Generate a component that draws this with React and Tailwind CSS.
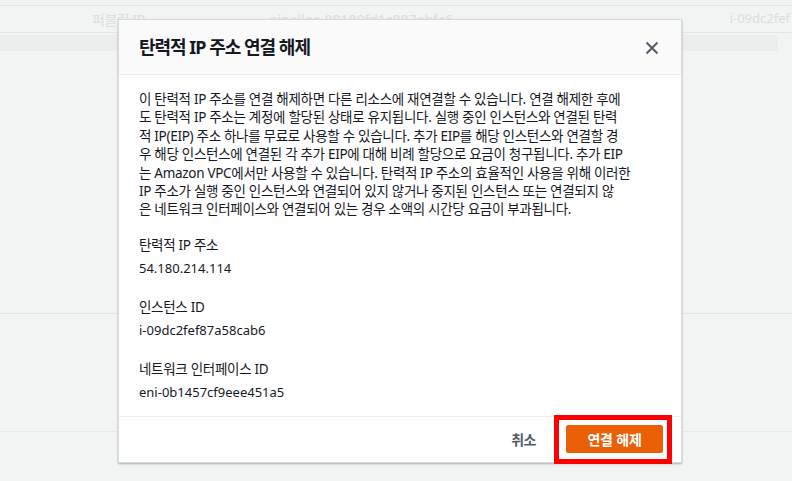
const lines = [
  "이 탄력적 IP 주소를 연결 해제하면 다른 리소스에 재연결할 수 있습니다. 연결 해제한 후에",
  "도 탄력적 IP 주소는 계정에 할당된 상태로 유지됩니다. 실행 중인 인스턴스와 연결된 탄력",
  "적 IP(EIP) 주소 하나를 무료로 사용할 수 있습니다. 추가 EIP를 해당 인스턴스와 연결할 경",
  "우 해당 인스턴스에 연결된 각 추가 EIP에 대해 비례 할당으로 요금이 청구됩니다. 추가 EIP",
  "는 Amazon VPC에서만 사용할 수 있습니다. 탄력적 IP 주소의 효율적인 사용을 위해 이러한",
  "IP 주소가 실행 중인 인스턴스와 연결되어 있지 않거나 중지된 인스턴스 또는 연결되지 않",
  "은 네트워크 인터페이스와 연결되어 있는 경우 소액의 시간당 요금이 부과됩니다.",
];

const fields = [
  { label: "탄력적 IP 주소", value: "54.180.214.114" },
  { label: "인스턴스 ID", value: "i-09dc2fef87a58cab6" },
  { label: "네트워크 인터페이스 ID", value: "eni-0b1457cf9eee451a5" },
];

const App = () => {
  return (
    <div className="relative h-[481px] w-full overflow-hidden bg-[#f2f3f3] font-['Noto_Sans','Noto_Sans_CJK_KR',sans-serif] text-[#16191f]">
      {/* Page behind the modal */}
      <div className="flex flex-col">
        <div className="h-[5px]" />
        <div className="h-[1px] bg-[#dfe7ed]" />
        <div className="flex h-[26px] items-center text-[14px] text-[#d9dee1]">
          <span className="ml-[92px] tracking-[-0.5px]">퍼블릭 IP</span>
          <span className="ml-[125px]">eipalloc-08180fd1c887ebfc6</span>
          <span className="ml-auto mr-[2px] text-[13px]">i-09dc2fef</span>
        </div>
        <div className="h-[1px] bg-[#dfe7ed]" />
        <div className="mt-[2px] h-[16px] w-[778px] bg-[#eceded]" />
        <div className="h-[262px]" />
        <div className="h-[1px] bg-[#e3e5e6]" />
        <div className="h-[117px]" />
        <div className="h-[1px] bg-[#e6e8e9]" />
      </div>

      {/* Modal */}
      <div className="absolute left-[118px] top-[19px] flex w-[564px] flex-col border border-[#d5dbdb] bg-white shadow-[0_1px_2px_rgba(0,28,36,0.3)]">
        <div className="flex h-[55px] items-center justify-between border-b border-[#eaeded] bg-[#fafafa] pl-[20px] pr-[22px]">
          <h2 className="text-[18px] font-bold tracking-[-1px]">탄력적 IP 주소 연결 해제</h2>
          <svg width="14" height="14" viewBox="0 0 14 14" className="mt-[2px]">
            <path d="M1.5 1.5L12.5 12.5M12.5 1.5L1.5 12.5" stroke="#545b64" strokeWidth="2" fill="none" />
          </svg>
        </div>

        <div className="flex flex-col px-[20px] pb-[14px] pt-[15px]">
          <p className="text-[13.5px] leading-[18.4px] tracking-[-0.3px]">
            {lines.map((l) => (
              <span key={l} className="block whitespace-nowrap">
                {l}
              </span>
            ))}
          </p>
          <div className="mt-[16px] flex flex-col gap-[19px]">
            {fields.map((f) => (
              <div key={f.label} className="flex flex-col gap-[3px]">
                <span className="text-[13.5px] leading-[20px] tracking-[-0.3px]">{f.label}</span>
                <span className="text-[13px] leading-[20px]">{f.value}</span>
              </div>
            ))}
          </div>
        </div>

        <div className="flex h-[46px] items-center justify-end gap-[30px] border-t border-[#eaeded] pr-[18px]">
          <button className="text-[14px] font-bold tracking-[-0.5px] text-[#545b64]">취소</button>
          <div className="relative">
            <button className="flex h-[28px] w-[97px] items-center justify-center rounded-[2px] bg-[#eb5f07] text-[14px] font-bold tracking-[-0.2px] text-white">
              연결 해제
            </button>
            <div className="absolute -bottom-[11px] -left-[12px] -right-[9px] -top-[10px] border-[5px] border-[#ff0000]" />
          </div>
        </div>
      </div>
    </div>
  );
};

export default App;
